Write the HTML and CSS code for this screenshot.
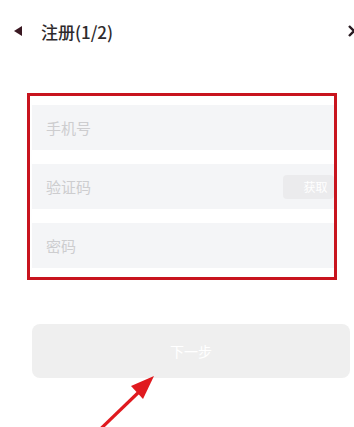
FILE: index.html
```html
<!DOCTYPE html>
<html lang="zh">

<head>
    <meta charset="UTF-8">
    <meta name="viewport" content="width=device-width, initial-scale=1.0">
    <title>注册</title>
    <link rel="stylesheet" href="styles.css">
</head>

<body class="main">
    <div class="header">
        <span class="back"></span>
        <span class="title">注册(1/2)</span>
        <svg class="close" width="14" height="14" viewBox="0 0 14 14">
            <path d="M2 2 L12 12 M12 2 L2 12" stroke="#2a1c22" stroke-width="2.4" fill="none" />
        </svg>
    </div>

    <div class="form-box">
        <div class="field"><span class="hint">手机号</span></div>
        <div class="field">
            <span class="hint">验证码</span>
            <button class="btn-code">获取</button>
        </div>
        <div class="field"><span class="hint">密码</span></div>
    </div>

    <button class="btn-next">下一步</button>

    <!-- red arrow pointing at the button -->
    <svg class="arrow" width="80" height="70" viewBox="0 0 80 70">
        <path d="M6 68 L60 16" stroke="#e01a1f" stroke-width="3.2" fill="none" />
        <path d="M72 3 L49 13 L61 26 Z" fill="#e01a1f" />
    </svg>
</body>

</html>
```

FILE: styles.css
```css
.main {
    margin: 0;
    background-color: #ffffff;
    font-family: "Noto Sans CJK SC", "Noto Sans", sans-serif;
    position: relative;
    height: 427px;
    overflow: hidden;
}

.header {
    display: flex;
    align-items: center;
    height: 62px;
    padding-left: 14px;
}

.back {
    width: 0;
    height: 0;
    border-top: 5.5px solid transparent;
    border-bottom: 5.5px solid transparent;
    border-right: 8px solid #3a1822;
}

.title {
    margin-left: 19px;
    font-size: 17px;
    font-weight: 500;
    color: #2e2a2c;
}

.close {
    margin-left: auto;
    margin-right: -7px;
}

.form-box {
    margin: 31px 17px 0 27px;
    border: 3px solid #c8141e;
    padding: 9px 0 9px 2px;
    display: flex;
    flex-direction: column;
    gap: 14px;
}

.field {
    height: 45px;
    background-color: #f4f5f7;
    display: flex;
    align-items: center;
    padding-left: 14px;
    padding-right: 0;
}

.hint {
    font-size: 15px;
    color: #cdcdcf;
}

.btn-code {
    margin-left: auto;
    width: 51px;
    height: 24px;
    border: none;
    border-radius: 4px;
    background-color: #ebebed;
    color: #ffffff;
    font-family: inherit;
    font-size: 12px;
    padding: 0 0 0 14px;
}

.btn-next {
    display: block;
    margin: 44px 4px 0 32px;
    width: 318px;
    height: 54px;
    border: none;
    border-radius: 8px;
    background-color: #efefef;
    color: #ffffff;
    font-family: inherit;
    font-size: 14px;
}

.arrow {
    position: absolute;
    left: 82px;
    top: 373px;
}
```
